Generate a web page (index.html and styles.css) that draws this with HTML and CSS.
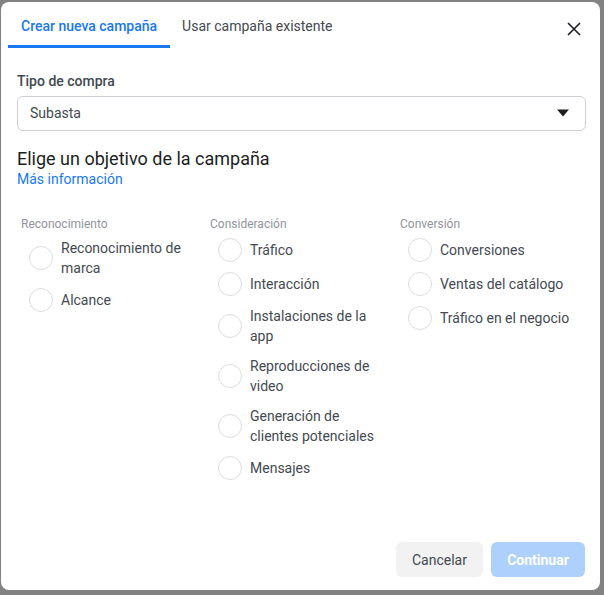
FILE: index.html
```html
<!DOCTYPE html>
<html lang="es">
<head>
<meta charset="utf-8">
<title>Crear campaña</title>
<link rel="stylesheet" href="styles.css">
</head>
<body>
<div class="dialog">
  <div class="tabs">
    <div class="tab active">Crear nueva campaña</div>
    <div class="tab">Usar campaña existente</div>
    <button class="close" aria-label="Cerrar">
      <svg width="14" height="14" viewBox="0 0 14 14"><path d="M1 1L13 13M13 1L1 13" stroke="#1c1e21" stroke-width="1.6" fill="none"/></svg>
    </button>
  </div>
  <div class="body">
    <div class="field-label">Tipo de compra</div>
    <div class="select">
      <span>Subasta</span>
      <svg width="12" height="8" viewBox="0 0 12 8"><path d="M0 0.5H12L6 7.5Z" fill="#1c1e21"/></svg>
    </div>
    <div class="heading">Elige un objetivo de la campaña</div>
    <a class="link" href="#">Más información</a>
    <div class="columns">
      <div class="col">
        <div class="col-title">Reconocimiento</div>
        <div class="opt"><span class="radio"></span><span class="txt">Reconocimiento de marca</span></div>
        <div class="opt"><span class="radio"></span><span class="txt">Alcance</span></div>
      </div>
      <div class="col">
        <div class="col-title">Consideración</div>
        <div class="opt"><span class="radio"></span><span class="txt">Tráfico</span></div>
        <div class="opt"><span class="radio"></span><span class="txt">Interacción</span></div>
        <div class="opt"><span class="radio"></span><span class="txt">Instalaciones de la app</span></div>
        <div class="opt"><span class="radio"></span><span class="txt">Reproducciones de video</span></div>
        <div class="opt"><span class="radio"></span><span class="txt">Generación de clientes potenciales</span></div>
        <div class="opt"><span class="radio"></span><span class="txt">Mensajes</span></div>
      </div>
      <div class="col">
        <div class="col-title">Conversión</div>
        <div class="opt"><span class="radio"></span><span class="txt">Conversiones</span></div>
        <div class="opt"><span class="radio"></span><span class="txt">Ventas del catálogo</span></div>
        <div class="opt"><span class="radio"></span><span class="txt">Tráfico en el negocio</span></div>
      </div>
    </div>
  </div>
  <div class="footer">
    <button class="btn cancel">Cancelar</button>
    <button class="btn primary">Continuar</button>
  </div>
</div>
</body>
</html>
```
FILE: styles.css
```css
html, body {
  margin: 0;
  padding: 0;
  height: 100%;
}
body {
  background: #828282;
  font-family: Roboto, "Liberation Sans", Arial, sans-serif;
  color: #444950;
}
.dialog {
  position: relative;
  margin: 2px 4px 0 1px;
  width: 599px;
  height: 588px;
  background: #fff;
  border-radius: 8px;
  box-sizing: border-box;
  display: flex;
  flex-direction: column;
}
.tabs {
  display: flex;
  align-items: stretch;
  height: 46px;
  padding-left: 7px;
}
.tab {
  font-size: 14px;
  line-height: 20px;
  padding: 14px 11px 0 12px;
  color: #444950;
  box-sizing: border-box;
  border-bottom: 3px solid transparent;
}
.tab.active {
  color: #1877f2;
  font-weight: 500;
  padding: 14px 13px 0 13px;
  border-bottom-color: #1877f2;
}
.close {
  margin-left: auto;
  margin-right: 19px;
  margin-top: 20px;
  width: 14px;
  height: 14px;
  padding: 0;
  border: 0;
  background: none;
  display: flex;
}
.body {
  padding: 0 14px 0 16px;
  flex: 1;
}
.field-label {
  margin-top: 24px;
  font-size: 14px;
  font-weight: 500;
  line-height: 18px;
  color: #444950;
}
.select {
  margin-top: 6px;
  height: 35px;
  border: 1px solid #ccd0d5;
  border-radius: 6px;
  box-sizing: border-box;
  display: flex;
  align-items: center;
  justify-content: space-between;
  padding: 0 16px 1px 12px;
  font-size: 14px;
  color: #444950;
}
.heading {
  margin-top: 16px;
  font-size: 18px;
  line-height: 23px;
  color: #1c1e21;
}
.link {
  display: block;
  font-size: 14px;
  line-height: 18px;
  color: #1877f2;
  text-decoration: none;
}
.columns {
  display: grid;
  grid-template-columns: 189px 190px 180px;
  margin-top: 28px;
  padding-left: 4px;
}
.col-title {
  font-size: 12px;
  line-height: 16px;
  color: #90949c;
  margin-bottom: 1px;
}
.opt {
  display: flex;
  align-items: center;
  padding: 5px 0 5px 8px;
}
.radio {
  flex: none;
  width: 22px;
  height: 22px;
  border: 1px solid #dadde1;
  border-radius: 50%;
  margin-right: 8px;
}
.txt {
  font-size: 14px;
  line-height: 20px;
  color: #444950;
  max-width: 135px;
}
.footer {
  display: flex;
  justify-content: flex-end;
  gap: 8px;
  padding: 0 15px 13px 0;
}
.btn {
  height: 35px;
  border: 0;
  border-radius: 6px;
  font-family: inherit;
  font-size: 14px;
  padding: 0 12px;
}
.cancel {
  background: #f2f2f2;
  color: #444950;
  width: 87px;
}
.primary {
  background: #aed0fc;
  color: #fff;
  font-weight: 700;
  width: 94px;
}
```
